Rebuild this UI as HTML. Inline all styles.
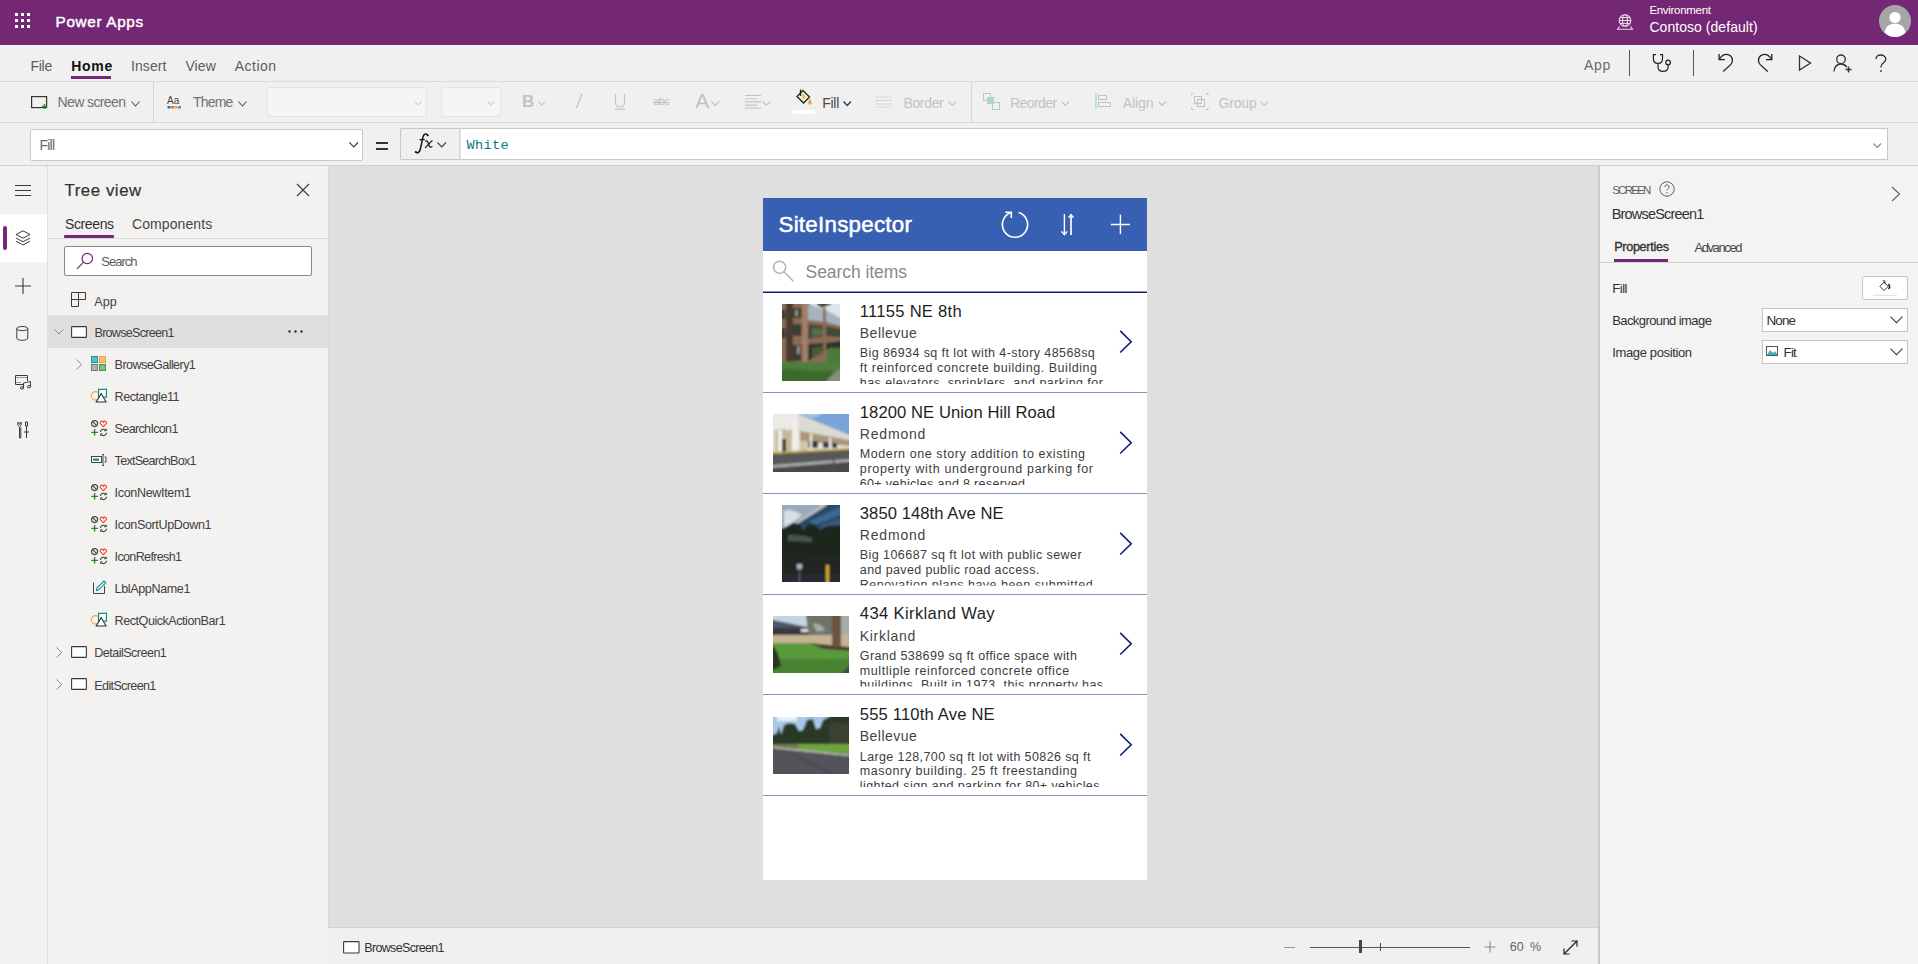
<!DOCTYPE html><html><head><meta charset="utf-8"><style>
*{margin:0;padding:0}
html,body{width:1918px;height:964px;overflow:hidden;background:#f0f0f0;position:relative}
.a{position:absolute}
.t{line-height:1;white-space:nowrap}
svg.a{overflow:visible}
</style></head><body><div class="a" style="left:0px;top:0px;width:1918px;height:45px;background:#742774;"></div>
<div class="a" style="left:15px;top:13px;width:3px;height:3px;background:#fff;"></div>
<div class="a" style="left:15px;top:19px;width:3px;height:3px;background:#fff;"></div>
<div class="a" style="left:15px;top:25px;width:3px;height:3px;background:#fff;"></div>
<div class="a" style="left:21px;top:13px;width:3px;height:3px;background:#fff;"></div>
<div class="a" style="left:21px;top:19px;width:3px;height:3px;background:#fff;"></div>
<div class="a" style="left:21px;top:25px;width:3px;height:3px;background:#fff;"></div>
<div class="a" style="left:27px;top:13px;width:3px;height:3px;background:#fff;"></div>
<div class="a" style="left:27px;top:19px;width:3px;height:3px;background:#fff;"></div>
<div class="a" style="left:27px;top:25px;width:3px;height:3px;background:#fff;"></div>
<div class="a t" style="left:55.60px;top:14.19px;font-size:15.3px;font-weight:400;color:#fff;font-family:'Liberation Sans', sans-serif;letter-spacing:0.654px;-webkit-text-stroke:0.45px #fff;">Power Apps</div>
<svg class="a" style="left:1616px;top:13px;" width="18" height="18" viewBox="0 0 18 18" fill="none"><g stroke="#e8d6e8" stroke-width="1.1"><circle cx="9" cy="7.5" r="5.8"/><ellipse cx="9" cy="7.5" rx="2.5" ry="5.8"/><line x1="3.2" y1="7.5" x2="14.8" y2="7.5"/><line x1="4" y1="4.6" x2="14" y2="4.6"/><line x1="4" y1="10.4" x2="14" y2="10.4"/><path d="M3.5 13.2 L1.5 16.3 H16.5 L14.5 13.2"/></g></svg>
<div class="a t" style="left:1649.40px;top:5.03px;font-size:11.5px;font-weight:400;color:#fff;font-family:'Liberation Sans', sans-serif;letter-spacing:-0.301px;">Environment</div>
<div class="a t" style="left:1649.40px;top:19.90px;font-size:14px;font-weight:400;color:#fff;font-family:'Liberation Sans', sans-serif;letter-spacing:0.050px;">Contoso (default)</div>
<svg class="a" style="left:1879px;top:5px;" width="32" height="32" viewBox="0 0 32 32" fill="none"><circle cx="16" cy="16" r="16" fill="#a6a6a6"/><circle cx="16" cy="12.5" r="5.6" fill="#fff"/><path d="M5.5 27.5 C7 20.5 11 18.8 16 18.8 C21 18.8 25 20.5 26.5 27.5 C23.5 30.5 20 32 16 32 C12 32 8.5 30.5 5.5 27.5Z" fill="#fff"/></svg>
<div class="a" style="left:0px;top:45px;width:1918px;height:1px;background:#f7f7f7;"></div>
<div class="a" style="left:0px;top:46px;width:1918px;height:35px;background:#f0f0f0;"></div>
<div class="a" style="left:0px;top:81px;width:1918px;height:1px;background:#dadada;"></div>
<div class="a t" style="left:30.50px;top:59.40px;font-size:14px;font-weight:400;color:#5c5c5c;font-family:'Liberation Sans', sans-serif;letter-spacing:-0.288px;">File</div>
<div class="a t" style="left:71.20px;top:59.40px;font-size:14px;font-weight:700;color:#111;font-family:'Liberation Sans', sans-serif;letter-spacing:0.698px;">Home</div>
<div class="a" style="left:71px;top:76px;width:40px;height:3px;background:#742774;"></div>
<div class="a t" style="left:131.00px;top:59.40px;font-size:14px;font-weight:400;color:#5c5c5c;font-family:'Liberation Sans', sans-serif;letter-spacing:0.077px;">Insert</div>
<div class="a t" style="left:185.40px;top:59.40px;font-size:14px;font-weight:400;color:#5c5c5c;font-family:'Liberation Sans', sans-serif;letter-spacing:0.102px;">View</div>
<div class="a t" style="left:234.70px;top:59.40px;font-size:14px;font-weight:400;color:#5c5c5c;font-family:'Liberation Sans', sans-serif;letter-spacing:0.496px;">Action</div>
<div class="a t" style="left:1583.90px;top:58.00px;font-size:14px;font-weight:400;color:#6a6a6a;font-family:'Liberation Sans', sans-serif;letter-spacing:0.739px;">App</div>
<div class="a" style="left:1629px;top:50px;width:1px;height:26px;background:#555;"></div>
<div class="a" style="left:1693px;top:50px;width:1px;height:26px;background:#555;"></div>
<svg class="a" style="left:1652px;top:54px;" width="21" height="19" viewBox="0 0 21 19" fill="none"><g stroke="#222" stroke-width="1.2" fill="none"><path d="M4 0.6 H1.4 V5 C1.4 7.7 3.4 9.4 6 9.4 C8.6 9.4 10.5 7.7 10.5 5 V0.6 H8"/><path d="M6 9.4 V13 C6 15.7 8 17.4 11 17.4 C14 17.4 16.1 15.7 16.1 13 V10.7"/><circle cx="16.1" cy="8.4" r="2.3"/></g></svg>
<svg class="a" style="left:1718px;top:54px;" width="16" height="18" viewBox="0 0 16 18" fill="none"><g stroke="#222" stroke-width="1.3" fill="none"><path d="M1.1 0 V5.6 H6.8"/><path d="M1.4 5.3 C3.5 1.6 6 0.4 8.5 0.4 C11.6 0.4 14.4 2.9 14.4 6.4 C14.4 8.2 13.7 9.6 12.4 10.9 L5.2 17.6"/></g></svg>
<svg class="a" style="left:1757px;top:54px;" width="16" height="18" viewBox="0 0 16 18" fill="none"><g transform="translate(15.9 0) scale(-1 1)"><g stroke="#222" stroke-width="1.3" fill="none"><path d="M1.1 0 V5.6 H6.8"/><path d="M1.4 5.3 C3.5 1.6 6 0.4 8.5 0.4 C11.6 0.4 14.4 2.9 14.4 6.4 C14.4 8.2 13.7 9.6 12.4 10.9 L5.2 17.6"/></g></g></svg>
<svg class="a" style="left:1798px;top:55px;" width="14" height="16" viewBox="0 0 14 16" fill="none"><path d="M1.5 1 L12.5 8 L1.5 15 Z" stroke="#333" stroke-width="1.3" fill="none" stroke-linejoin="miter"/></svg>
<svg class="a" style="left:1833px;top:54px;" width="20" height="19" viewBox="0 0 20 19" fill="none"><g stroke="#333" stroke-width="1.3" fill="none"><circle cx="8" cy="5.3" r="4.3"/><path d="M1 17.5 C1.5 12.5 4.5 10 8 10 C10.5 10 12.5 11.2 13.8 13"/><path d="M15.5 12.5 V18.5 M12.5 15.5 H18.5" stroke-width="1.5"/></g></svg>
<svg class="a" style="left:1874px;top:54px;" width="14" height="19" viewBox="0 0 14 19" fill="none"><g stroke="#333" stroke-width="1.3" fill="none"><path d="M2 5 C2 2.5 4 1 6.8 1 C9.6 1 11.8 2.8 11.8 5.3 C11.8 8.5 7 9 7 12.5 V13.5"/></g><circle cx="7" cy="17" r="0.9" fill="#333"/></svg>
<div class="a" style="left:0px;top:82px;width:1918px;height:40px;background:#f0f0f0;"></div>
<div class="a" style="left:0px;top:122px;width:1918px;height:1px;background:#d8d8d8;"></div>
<svg class="a" style="left:31px;top:96px;" width="17" height="13" viewBox="0 0 17 13" fill="none"><rect x="0.6" y="0.6" width="15" height="11" stroke="#333" stroke-width="1.2" fill="none"/><path d="M13.5 8 V13 M11 10.5 H16" stroke="#1e8a1e" stroke-width="1.3"/></svg>
<div class="a t" style="left:57.60px;top:95.40px;font-size:14px;font-weight:400;color:#707070;font-family:'Liberation Sans', sans-serif;letter-spacing:-0.614px;">New screen</div>
<svg class="a" style="left:130.7px;top:100.5px;" width="9" height="6" viewBox="0 0 9 6" fill="none"><path d="M0.5 0.5 L4.5 5 L8.5 0.5" stroke="#555" stroke-width="1.1" fill="none"/></svg>
<div class="a" style="left:153px;top:82px;width:1px;height:40px;background:#d6d6d6;"></div>
<svg class="a" style="left:167px;top:95px;" width="15" height="14" viewBox="0 0 15 14" fill="none"><text x="0" y="9" font-family="Liberation Sans" font-size="10" fill="#444">Aa</text><rect x="0.5" y="11" width="3" height="2.5" fill="#2b6cb0"/><rect x="4" y="11" width="3" height="2.5" fill="#d97a2b"/><rect x="7.5" y="11" width="3" height="2.5" fill="#e0a050"/><rect x="11" y="11" width="3" height="2.5" fill="#5aa07a"/></svg>
<div class="a t" style="left:193.00px;top:95.40px;font-size:14px;font-weight:400;color:#707070;font-family:'Liberation Sans', sans-serif;letter-spacing:-0.795px;">Theme</div>
<svg class="a" style="left:238px;top:100.5px;" width="9" height="6" viewBox="0 0 9 6" fill="none"><path d="M0.5 0.5 L4.5 5 L8.5 0.5" stroke="#555" stroke-width="1.1" fill="none"/></svg>
<div class="a" style="left:267px;top:87px;width:160px;height:30px;background:#f5f5f5;border:1px solid #e3e3e3;box-sizing:border-box;border-radius:2px"></div>
<svg class="a" style="left:414px;top:100.5px;" width="8" height="5" viewBox="0 0 8 5" fill="none"><path d="M0.5 0.5 L4.0 4 L7.5 0.5" stroke="#d0d0d0" stroke-width="1.1" fill="none"/></svg>
<div class="a" style="left:441px;top:87px;width:60px;height:30px;background:#f5f5f5;border:1px solid #e3e3e3;box-sizing:border-box;border-radius:2px"></div>
<svg class="a" style="left:487px;top:100.5px;" width="8" height="5" viewBox="0 0 8 5" fill="none"><path d="M0.5 0.5 L4.0 4 L7.5 0.5" stroke="#d0d0d0" stroke-width="1.1" fill="none"/></svg>
<div class="a t" style="left:522.00px;top:93.35px;font-size:17px;font-weight:700;color:#c2c2c2;font-family:'Liberation Sans', sans-serif;">B</div>
<svg class="a" style="left:538px;top:101px;" width="7.5" height="5" viewBox="0 0 7.5 5" fill="none"><path d="M0.5 0.5 L3.75 4 L7.0 0.5" stroke="#c2c2c2" stroke-width="1.1" fill="none"/></svg>
<svg class="a" style="left:575px;top:93px;" width="8" height="16" viewBox="0 0 8 16" fill="none"><path d="M7 1 L1.5 15" stroke="#c2c2c2" stroke-width="1.3"/></svg>
<svg class="a" style="left:614px;top:93px;" width="12" height="17" viewBox="0 0 12 17" fill="none"><g stroke="#c2c2c2" stroke-width="1.1" fill="none"><path d="M1.5 1 V9.5 C1.5 12.5 3.5 14 6 14 C8.5 14 10.5 12.5 10.5 9.5 V1"/><path d="M1 16.2 H11"/></g></svg>
<div class="a t" style="left:653.50px;top:95.65px;font-size:11px;font-weight:400;color:#c2c2c2;font-family:'Liberation Sans', sans-serif;letter-spacing:-0.825px;">abc</div>
<div class="a" style="left:653px;top:101.8px;width:16px;height:1px;background:#c2c2c2;"></div>
<div class="a t" style="left:695.20px;top:90.15px;font-size:21px;font-weight:400;color:#c2c2c2;font-family:'Liberation Sans', sans-serif;letter-spacing:1.084px;">A</div>
<svg class="a" style="left:711px;top:100.5px;" width="8.5" height="5.5" viewBox="0 0 8.5 5.5" fill="none"><path d="M0.5 0.5 L4.25 4.5 L8.0 0.5" stroke="#c2c2c2" stroke-width="1.1" fill="none"/></svg>
<svg class="a" style="left:745px;top:95px;" width="17" height="13" viewBox="0 0 17 13" fill="none"><g stroke="#c2c2c2" stroke-width="1.1"><path d="M0 0.5 H16 M0 3.7 H12 M0 6.9 H16 M0 10.1 H12 M0 13 H16"/></g></svg>
<svg class="a" style="left:762px;top:101px;" width="8.5" height="5.5" viewBox="0 0 8.5 5.5" fill="none"><path d="M0.5 0.5 L4.25 4.5 L8.0 0.5" stroke="#c2c2c2" stroke-width="1.1" fill="none"/></svg>
<svg class="a" style="left:794px;top:89px;" width="20" height="19" viewBox="0 0 20 19" fill="none"><g stroke="#222" stroke-width="1.3" fill="none"><path d="M9 1.5 L15.5 8 L9.5 14 L3 7.5 Z"/><path d="M6.5 0.5 V7"/></g><path d="M15.8 9.5 C16.8 11.5 17.8 12.5 17.8 13.8 C17.8 15 17 15.8 16 15.8 C15 15.8 14.2 15 14.2 13.8 C14.2 12.5 15 11.5 15.8 9.5Z" fill="#e3b11c"/><path d="M7.5 3.5 L12 7.8 L9 10.8" fill="#e3b11c" stroke="none" opacity="0.8"/></svg>
<div class="a" style="left:793px;top:110px;width:22px;height:4px;background:#ffffff;"></div>
<div class="a t" style="left:822.30px;top:95.60px;font-size:14px;font-weight:400;color:#4a4a4a;font-family:'Liberation Sans', sans-serif;letter-spacing:-0.297px;">Fill</div>
<svg class="a" style="left:843px;top:100.5px;" width="8.5" height="5.5" viewBox="0 0 8.5 5.5" fill="none"><path d="M0.5 0.5 L4.25 4.5 L8.0 0.5" stroke="#333" stroke-width="1.2" fill="none"/></svg>
<svg class="a" style="left:876px;top:96px;" width="16" height="12" viewBox="0 0 16 12" fill="none"><g stroke="#c2c2c2" stroke-width="1" stroke-dasharray="1.2 1"><path d="M0 1 H16 M0 4.5 H16 M0 8 H16 M0 11 H16"/></g></svg>
<div class="a t" style="left:903.40px;top:95.60px;font-size:14px;font-weight:400;color:#c2c2c2;font-family:'Liberation Sans', sans-serif;letter-spacing:-0.326px;">Border</div>
<svg class="a" style="left:948px;top:100.5px;" width="8.5" height="5.5" viewBox="0 0 8.5 5.5" fill="none"><path d="M0.5 0.5 L4.25 4.5 L8.0 0.5" stroke="#c2c2c2" stroke-width="1.1" fill="none"/></svg>
<div class="a" style="left:971px;top:82px;width:1px;height:40px;background:#d8d8d8;"></div>
<svg class="a" style="left:983px;top:93px;" width="18" height="18" viewBox="0 0 18 18" fill="none"><g stroke="#c2c2c2" stroke-width="1" fill="none"><rect x="0.5" y="0.5" width="7" height="7"/><rect x="9.5" y="9.5" width="7" height="7"/></g><rect x="4" y="4" width="7" height="7" fill="#a8d6d6"/></svg>
<div class="a t" style="left:1010.00px;top:95.60px;font-size:14px;font-weight:400;color:#c2c2c2;font-family:'Liberation Sans', sans-serif;letter-spacing:-0.566px;">Reorder</div>
<svg class="a" style="left:1061.4px;top:100.5px;" width="8.5" height="5.5" viewBox="0 0 8.5 5.5" fill="none"><path d="M0.5 0.5 L4.25 4.5 L8.0 0.5" stroke="#c2c2c2" stroke-width="1.1" fill="none"/></svg>
<svg class="a" style="left:1095px;top:93px;" width="18" height="16" viewBox="0 0 18 16" fill="none"><path d="M1 0 V16" stroke="#8fcfcf" stroke-width="1"/><g stroke="#c2c2c2" stroke-width="1" fill="none"><rect x="3.5" y="2.5" width="8" height="4"/><rect x="3.5" y="9.5" width="12" height="4"/></g></svg>
<div class="a t" style="left:1122.70px;top:95.60px;font-size:14px;font-weight:400;color:#c2c2c2;font-family:'Liberation Sans', sans-serif;letter-spacing:-0.060px;">Align</div>
<svg class="a" style="left:1157.7px;top:100.5px;" width="8.5" height="5.5" viewBox="0 0 8.5 5.5" fill="none"><path d="M0.5 0.5 L4.25 4.5 L8.0 0.5" stroke="#c2c2c2" stroke-width="1.1" fill="none"/></svg>
<svg class="a" style="left:1191px;top:93px;" width="18" height="17" viewBox="0 0 18 17" fill="none"><g stroke="#c2c2c2" stroke-width="1" fill="none"><rect x="3.5" y="3.5" width="7" height="7"/><rect x="6.5" y="6.5" width="7" height="7"/><path d="M0.5 0.5 H2.5 M0.5 0.5 V2.5 M17 0.5 H15 M17 0.5 V2.5 M0.5 16.5 H2.5 M0.5 16.5 V14.5 M17 16.5 H15 M17 16.5 V14.5"/></g></svg>
<div class="a t" style="left:1218.50px;top:95.60px;font-size:14px;font-weight:400;color:#c2c2c2;font-family:'Liberation Sans', sans-serif;letter-spacing:-0.180px;">Group</div>
<svg class="a" style="left:1260.3px;top:100.5px;" width="8.5" height="5.5" viewBox="0 0 8.5 5.5" fill="none"><path d="M0.5 0.5 L4.25 4.5 L8.0 0.5" stroke="#c2c2c2" stroke-width="1.1" fill="none"/></svg>
<div class="a" style="left:0px;top:123px;width:1918px;height:42px;background:#f0f0f0;"></div>
<div class="a" style="left:0px;top:165px;width:1918px;height:1px;background:#d0d0d0;"></div>
<div class="a" style="left:30px;top:129px;width:333px;height:32px;background:#fff;border:1px solid #c8c8c8;box-sizing:border-box;border-radius:2px"></div>
<div class="a t" style="left:39.60px;top:138.10px;font-size:14px;font-weight:400;color:#6a6a6a;font-family:'Liberation Sans', sans-serif;letter-spacing:-0.830px;">Fill</div>
<svg class="a" style="left:349px;top:142px;" width="9.5" height="6" viewBox="0 0 9.5 6" fill="none"><path d="M0.5 0.5 L4.75 5 L9.0 0.5" stroke="#444" stroke-width="1.2" fill="none"/></svg>
<div class="a" style="left:376px;top:142px;width:12px;height:2px;background:#333;"></div>
<div class="a" style="left:376px;top:148px;width:12px;height:2px;background:#333;"></div>
<div class="a" style="left:400px;top:128px;width:60px;height:32px;background:#f0f0f0;border:1px solid #c8c8c8;box-sizing:border-box;border-radius:2px 0 0 2px;border-right-color:#d8d8d8"></div>
<svg class="a" style="left:412px;top:132px;" width="22" height="23" viewBox="0 0 22 23" fill="none"><g stroke="#111" fill="none" stroke-linecap="round"><path d="M15.6 3.2 C14.8 1.6 12.2 1.4 11.2 4.2 C10.4 6.5 9.4 13 8.2 17.5 C7.4 20.5 5.5 21.6 3.6 20.2" stroke-width="1.5"/><path d="M8 7.6 H12.4" stroke-width="1.1"/><path d="M13.6 9.2 C15.2 8.2 16 9.6 16.6 12 C17.2 14.4 18.2 16 20 14.6" stroke-width="1.2"/><path d="M20.2 8.8 C18.6 9.6 16.2 12.6 13.4 15.6" stroke-width="1.2"/></g><circle cx="15.8" cy="3.4" r="0.9" fill="#111"/><circle cx="3.8" cy="20" r="0.9" fill="#111"/></svg>
<svg class="a" style="left:437.3px;top:142px;" width="9.5" height="6" viewBox="0 0 9.5 6" fill="none"><path d="M0.5 0.5 L4.75 5 L9.0 0.5" stroke="#444" stroke-width="1.2" fill="none"/></svg>
<div class="a" style="left:460px;top:128px;width:1428px;height:32px;background:#fff;border:1px solid #c8c8c8;box-sizing:border-box;border-left:1px solid #e0e0e0"></div>
<div class="a t" style="left:466.40px;top:138.59px;font-size:13.7px;font-weight:400;color:#0b7a80;font-family:'Liberation Mono', monospace;letter-spacing:0.323px;">White</div>
<svg class="a" style="left:1873px;top:143px;" width="8.5" height="5.5" viewBox="0 0 8.5 5.5" fill="none"><path d="M0.5 0.5 L4.25 4.5 L8.0 0.5" stroke="#888" stroke-width="1.1" fill="none"/></svg>
<div class="a" style="left:0px;top:166px;width:47px;height:798px;background:#f3f2f1;"></div>
<div class="a" style="left:47px;top:166px;width:1px;height:798px;background:#e1dfdd;"></div>
<div class="a" style="left:48px;top:166px;width:280px;height:798px;background:#f3f2f1;"></div>
<div class="a" style="left:327px;top:166px;width:1px;height:798px;background:#f5f5f4;"></div>
<div class="a" style="left:328px;top:166px;width:1270px;height:761px;background:#dfdfdf;"></div>
<div class="a" style="left:328px;top:166px;width:2px;height:761px;background:#dbdbdb;"></div>
<div class="a" style="left:328px;top:927px;width:1270px;height:1px;background:#d2d2d2;"></div>
<div class="a" style="left:328px;top:928px;width:1270px;height:36px;background:#f0f0f0;"></div>
<div class="a" style="left:1598px;top:166px;width:2px;height:798px;background:#c9c9c9;"></div>
<div class="a" style="left:1600px;top:166px;width:318px;height:798px;background:#f3f3f3;"></div>
<svg class="a" style="left:15px;top:185px;" width="16" height="11" viewBox="0 0 16 11" fill="none"><g stroke="#3b3a39" stroke-width="1"><path d="M0 0.5 H16 M0 5.5 H16 M0 10.5 H16"/></g></svg>
<div class="a" style="left:0px;top:214px;width:47px;height:48px;background:#fff;"></div>
<div class="a" style="left:3px;top:226px;width:4px;height:24px;background:#742774;border-radius:2px"></div>
<svg class="a" style="left:15px;top:230px;" width="16" height="16" viewBox="0 0 16 16" fill="none"><g stroke="#3b3a39" stroke-width="1" fill="none" stroke-linejoin="round"><path d="M8 0.8 L15 4.5 L8 8.2 L1 4.5 Z"/><path d="M1 8 L8 11.7 L15 8"/><path d="M1 11.2 L8 14.9 L15 11.2"/></g></svg>
<svg class="a" style="left:15px;top:278px;" width="16" height="16" viewBox="0 0 16 16" fill="none"><path d="M8 0 V16 M0 8 H16" stroke="#3b3a39" stroke-width="1.1"/></svg>
<svg class="a" style="left:16px;top:326px;" width="13" height="15" viewBox="0 0 13 15" fill="none"><g stroke="#3b3a39" stroke-width="1" fill="none"><ellipse cx="6.3" cy="2.6" rx="5.5" ry="2.1"/><path d="M0.8 2.6 V12.2 C0.8 13.4 3.2 14.3 6.3 14.3 C9.4 14.3 11.8 13.4 11.8 12.2 V2.6"/></g></svg>
<svg class="a" style="left:15px;top:375px;" width="17" height="15" viewBox="0 0 17 15" fill="none"><g stroke="#3b3a39" stroke-width="1" fill="none"><path d="M9 9.5 H0.5 V0.5 H12.5 V6"/><path d="M0.5 2.5 H12.5 M0.5 7.5 H6" stroke-dasharray="1 1"/><path d="M8.5 13 V8 L15.5 6.5 V11.5"/><ellipse cx="7" cy="13" rx="1.6" ry="1.2"/><ellipse cx="14" cy="11.7" rx="1.6" ry="1.2"/></g></svg>
<svg class="a" style="left:17px;top:421px;" width="12" height="18" viewBox="0 0 12 18" fill="none"><g stroke="#3b3a39" stroke-width="1" fill="none"><path d="M2.5 17 V6 C1 5.2 0.6 3.5 1 1 L2 3 H3 L4 1 C4.4 3.5 4 5.2 2.5 6"/><path d="M2.5 6 V17 H3.8 V6.5"/><path d="M8.5 1 H10.5 V5 H8.5 Z M9.5 5 V17 M7 11 H12"/></g></svg>
<div class="a t" style="left:64.50px;top:182.52px;font-size:16.8px;font-weight:400;color:#323130;font-family:'Liberation Sans', sans-serif;letter-spacing:0.569px;-webkit-text-stroke:0.2px #323130;">Tree view</div>
<svg class="a" style="left:296px;top:183px;" width="14" height="14" viewBox="0 0 14 14" fill="none"><path d="M1 1 L13 13 M13 1 L1 13" stroke="#3b3a39" stroke-width="1.1"/></svg>
<div class="a t" style="left:65.00px;top:217.10px;font-size:14px;font-weight:400;color:#323130;font-family:'Liberation Sans', sans-serif;letter-spacing:-0.377px;">Screens</div>
<div class="a t" style="left:132.00px;top:217.10px;font-size:14px;font-weight:400;color:#484644;font-family:'Liberation Sans', sans-serif;letter-spacing:0.090px;">Components</div>
<div class="a" style="left:64px;top:235px;width:50px;height:3px;background:#742774;border-radius:1px"></div>
<div class="a" style="left:48px;top:238px;width:280px;height:1px;background:#dcdad8;"></div>
<div class="a" style="left:64px;top:246px;width:248px;height:30px;background:#fff;border:1px solid #8a8886;box-sizing:border-box;border-radius:2px"></div>
<svg class="a" style="left:76px;top:252px;" width="18" height="18" viewBox="0 0 18 18" fill="none"><g stroke="#742774" stroke-width="1.2" fill="none"><circle cx="11.3" cy="6.5" r="5.2"/><path d="M7.6 10.2 L1 16.8"/></g></svg>
<div class="a t" style="left:101.20px;top:255.45px;font-size:13px;font-weight:400;color:#605e5c;font-family:'Liberation Sans', sans-serif;letter-spacing:-0.981px;">Search</div>
<div class="a" style="left:48px;top:315px;width:280px;height:33px;background:#e1dfdd;"></div>
<svg class="a" style="left:288px;top:330px;" width="16" height="3" viewBox="0 0 16 3" fill="none"><circle cx="1.5" cy="1.5" r="1.2" fill="#333"/><circle cx="7.5" cy="1.5" r="1.2" fill="#333"/><circle cx="13.5" cy="1.5" r="1.2" fill="#333"/></svg>
<div class="a t" style="left:94.20px;top:295.69px;font-size:12.6px;font-weight:400;color:#42413f;font-family:'Liberation Sans', sans-serif;letter-spacing:0.119px;">App</div>
<svg class="a" style="left:71px;top:292px;" width="16" height="16" viewBox="0 0 16 16" fill="none"><g stroke="#3b3a39" stroke-width="1" fill="none"><path d="M0.5 0.5 H14.5 V7.5 H7.5 V14.5 H0.5 Z"/><path d="M7.5 0.5 V7.5 H0.5"/></g></svg>
<div class="a t" style="left:94.50px;top:327.09px;font-size:12.6px;font-weight:400;color:#42413f;font-family:'Liberation Sans', sans-serif;letter-spacing:-0.746px;">BrowseScreen1</div>
<svg class="a" style="left:54px;top:328.8px;" width="10" height="6" viewBox="0 0 10 6" fill="none"><path d="M0.5 0.5 L5 5 L9.5 0.5" stroke="#8a8886" stroke-width="1" fill="none"/></svg>
<svg class="a" style="left:71px;top:325.8px;" width="16" height="12" viewBox="0 0 16 12" fill="none"><rect x="0.6" y="0.6" width="14.8" height="10.8" rx="0.5" stroke="#3b3a39" stroke-width="1.1" fill="#fff"/></svg>
<div class="a t" style="left:114.60px;top:358.79px;font-size:12.6px;font-weight:400;color:#42413f;font-family:'Liberation Sans', sans-serif;letter-spacing:-0.587px;">BrowseGallery1</div>
<svg class="a" style="left:75.6px;top:358.5px;" width="7" height="11" viewBox="0 0 7 11" fill="none"><path d="M0.5 0.5 L5.5 5.5 L0.5 10.5" stroke="#8a8886" stroke-width="1" fill="none"/></svg>
<svg class="a" style="left:91px;top:356.0px;" width="15" height="15" viewBox="0 0 15 15" fill="none"><rect x="0.5" y="0.5" width="6" height="6" fill="#4fc1c8" stroke="#2a8f96" stroke-width="1"/><rect x="8.5" y="0.5" width="6" height="6" fill="#fbc37a" stroke="#e7a43f" stroke-width="1"/><rect x="0.5" y="8.5" width="6" height="6" fill="#b4b4b4" stroke="#777" stroke-width="1"/><rect x="8.5" y="8.5" width="6" height="6" fill="#7fc27f" stroke="#3d9a3d" stroke-width="1"/></svg>
<div class="a t" style="left:114.60px;top:390.79px;font-size:12.6px;font-weight:400;color:#42413f;font-family:'Liberation Sans', sans-serif;letter-spacing:-0.484px;">Rectangle11</div>
<svg class="a" style="left:90px;top:388px;" width="18" height="16" viewBox="0 0 18 16" fill="none"><circle cx="5.4" cy="7.8" r="4.2" stroke="#eba83a" stroke-width="1.1" fill="none"/><rect x="8.6" y="1.3" width="7.8" height="7.8" stroke="#0e8a8f" stroke-width="1.2" fill="#fff"/><path d="M11.2 5.6 L16 14 H6.2 Z" stroke="#333" stroke-width="1.1" fill="#fff" stroke-linejoin="miter"/></svg>
<div class="a t" style="left:114.60px;top:422.89px;font-size:12.6px;font-weight:400;color:#42413f;font-family:'Liberation Sans', sans-serif;letter-spacing:-0.686px;">SearchIcon1</div>
<svg class="a" style="left:91px;top:420.1px;" width="16" height="16" viewBox="0 0 16 16" fill="none"><circle cx="3.6" cy="3.6" r="3" stroke="#444" stroke-width="1.1" fill="none"/><path d="M1.5 1.5 L5.7 5.7" stroke="#444" stroke-width="1.1"/><path d="M12.3 6.6 L9.6 3.9 C8.8 3 9 1.5 10.2 1.2 C11.2 1 12 1.6 12.3 2.2 C12.6 1.6 13.4 1 14.4 1.2 C15.6 1.5 15.8 3 15 3.9 Z" stroke="#e0502a" stroke-width="1.1" fill="none"/><path d="M3.6 9 V15.6 M0.3 12.3 H6.9" stroke="#1e8a1e" stroke-width="1.3"/><path d="M9.5 12 C9.7 10.2 11 9.2 12.5 9.2 C13.5 9.2 14.3 9.6 14.8 10.3 M15.5 12.8 C15.3 14.6 14 15.6 12.5 15.6 C11.5 15.6 10.7 15.2 10.2 14.5" stroke="#444" stroke-width="1.1" fill="none"/><path d="M15.3 8.8 V10.8 H13.3 M9.7 16 V14 H11.7" stroke="#444" stroke-width="1" fill="none"/></svg>
<div class="a t" style="left:114.60px;top:454.89px;font-size:12.6px;font-weight:400;color:#42413f;font-family:'Liberation Sans', sans-serif;letter-spacing:-0.751px;">TextSearchBox1</div>
<svg class="a" style="left:91px;top:453.6px;" width="16" height="13" viewBox="0 0 16 13" fill="none"><rect x="0.5" y="2.5" width="10" height="6" stroke="#444" stroke-width="1" fill="#fff"/><rect x="2" y="4.5" width="6" height="2.2" fill="#0e8a8f"/><path d="M11 0.5 H13 M12 0.5 V11.5 M11 11.5 H13 M13.5 3 H15 V8 H13.5" stroke="#444" stroke-width="1" fill="none"/></svg>
<div class="a t" style="left:114.60px;top:486.89px;font-size:12.6px;font-weight:400;color:#42413f;font-family:'Liberation Sans', sans-serif;letter-spacing:-0.367px;">IconNewItem1</div>
<svg class="a" style="left:91px;top:484.1px;" width="16" height="16" viewBox="0 0 16 16" fill="none"><circle cx="3.6" cy="3.6" r="3" stroke="#444" stroke-width="1.1" fill="none"/><path d="M1.5 1.5 L5.7 5.7" stroke="#444" stroke-width="1.1"/><path d="M12.3 6.6 L9.6 3.9 C8.8 3 9 1.5 10.2 1.2 C11.2 1 12 1.6 12.3 2.2 C12.6 1.6 13.4 1 14.4 1.2 C15.6 1.5 15.8 3 15 3.9 Z" stroke="#e0502a" stroke-width="1.1" fill="none"/><path d="M3.6 9 V15.6 M0.3 12.3 H6.9" stroke="#1e8a1e" stroke-width="1.3"/><path d="M9.5 12 C9.7 10.2 11 9.2 12.5 9.2 C13.5 9.2 14.3 9.6 14.8 10.3 M15.5 12.8 C15.3 14.6 14 15.6 12.5 15.6 C11.5 15.6 10.7 15.2 10.2 14.5" stroke="#444" stroke-width="1.1" fill="none"/><path d="M15.3 8.8 V10.8 H13.3 M9.7 16 V14 H11.7" stroke="#444" stroke-width="1" fill="none"/></svg>
<div class="a t" style="left:114.60px;top:518.89px;font-size:12.6px;font-weight:400;color:#42413f;font-family:'Liberation Sans', sans-serif;letter-spacing:-0.375px;">IconSortUpDown1</div>
<svg class="a" style="left:91px;top:516.1px;" width="16" height="16" viewBox="0 0 16 16" fill="none"><circle cx="3.6" cy="3.6" r="3" stroke="#444" stroke-width="1.1" fill="none"/><path d="M1.5 1.5 L5.7 5.7" stroke="#444" stroke-width="1.1"/><path d="M12.3 6.6 L9.6 3.9 C8.8 3 9 1.5 10.2 1.2 C11.2 1 12 1.6 12.3 2.2 C12.6 1.6 13.4 1 14.4 1.2 C15.6 1.5 15.8 3 15 3.9 Z" stroke="#e0502a" stroke-width="1.1" fill="none"/><path d="M3.6 9 V15.6 M0.3 12.3 H6.9" stroke="#1e8a1e" stroke-width="1.3"/><path d="M9.5 12 C9.7 10.2 11 9.2 12.5 9.2 C13.5 9.2 14.3 9.6 14.8 10.3 M15.5 12.8 C15.3 14.6 14 15.6 12.5 15.6 C11.5 15.6 10.7 15.2 10.2 14.5" stroke="#444" stroke-width="1.1" fill="none"/><path d="M15.3 8.8 V10.8 H13.3 M9.7 16 V14 H11.7" stroke="#444" stroke-width="1" fill="none"/></svg>
<div class="a t" style="left:114.60px;top:550.89px;font-size:12.6px;font-weight:400;color:#42413f;font-family:'Liberation Sans', sans-serif;letter-spacing:-0.677px;">IconRefresh1</div>
<svg class="a" style="left:91px;top:548.1px;" width="16" height="16" viewBox="0 0 16 16" fill="none"><circle cx="3.6" cy="3.6" r="3" stroke="#444" stroke-width="1.1" fill="none"/><path d="M1.5 1.5 L5.7 5.7" stroke="#444" stroke-width="1.1"/><path d="M12.3 6.6 L9.6 3.9 C8.8 3 9 1.5 10.2 1.2 C11.2 1 12 1.6 12.3 2.2 C12.6 1.6 13.4 1 14.4 1.2 C15.6 1.5 15.8 3 15 3.9 Z" stroke="#e0502a" stroke-width="1.1" fill="none"/><path d="M3.6 9 V15.6 M0.3 12.3 H6.9" stroke="#1e8a1e" stroke-width="1.3"/><path d="M9.5 12 C9.7 10.2 11 9.2 12.5 9.2 C13.5 9.2 14.3 9.6 14.8 10.3 M15.5 12.8 C15.3 14.6 14 15.6 12.5 15.6 C11.5 15.6 10.7 15.2 10.2 14.5" stroke="#444" stroke-width="1.1" fill="none"/><path d="M15.3 8.8 V10.8 H13.3 M9.7 16 V14 H11.7" stroke="#444" stroke-width="1" fill="none"/></svg>
<div class="a t" style="left:114.60px;top:582.99px;font-size:12.6px;font-weight:400;color:#42413f;font-family:'Liberation Sans', sans-serif;letter-spacing:-0.395px;">LblAppName1</div>
<svg class="a" style="left:93px;top:580.2px;" width="13" height="14" viewBox="0 0 13 14" fill="none"><path d="M0.5 2.5 V13.5 H11.5 V6" stroke="#444" stroke-width="1" fill="none"/><path d="M3.5 10.5 L4 8 L11 1 L12.8 2.8 L5.8 9.8 Z" stroke="#0e8a8f" stroke-width="1.1" fill="#fff"/></svg>
<div class="a t" style="left:114.60px;top:615.09px;font-size:12.6px;font-weight:400;color:#42413f;font-family:'Liberation Sans', sans-serif;letter-spacing:-0.480px;">RectQuickActionBar1</div>
<svg class="a" style="left:90px;top:612px;" width="18" height="16" viewBox="0 0 18 16" fill="none"><circle cx="5.4" cy="7.8" r="4.2" stroke="#eba83a" stroke-width="1.1" fill="none"/><rect x="8.6" y="1.3" width="7.8" height="7.8" stroke="#0e8a8f" stroke-width="1.2" fill="#fff"/><path d="M11.2 5.6 L16 14 H6.2 Z" stroke="#333" stroke-width="1.1" fill="#fff" stroke-linejoin="miter"/></svg>
<div class="a t" style="left:94.30px;top:647.49px;font-size:12.6px;font-weight:400;color:#42413f;font-family:'Liberation Sans', sans-serif;letter-spacing:-0.546px;">DetailScreen1</div>
<svg class="a" style="left:56.3px;top:647.2px;" width="7" height="11" viewBox="0 0 7 11" fill="none"><path d="M0.5 0.5 L5.5 5.5 L0.5 10.5" stroke="#8a8886" stroke-width="1" fill="none"/></svg>
<svg class="a" style="left:71px;top:646.2px;" width="16" height="12" viewBox="0 0 16 12" fill="none"><rect x="0.6" y="0.6" width="14.8" height="10.8" rx="0.5" stroke="#3b3a39" stroke-width="1.1" fill="#fff"/></svg>
<div class="a t" style="left:94.30px;top:679.59px;font-size:12.6px;font-weight:400;color:#42413f;font-family:'Liberation Sans', sans-serif;letter-spacing:-0.655px;">EditScreen1</div>
<svg class="a" style="left:56.3px;top:679.3px;" width="7" height="11" viewBox="0 0 7 11" fill="none"><path d="M0.5 0.5 L5.5 5.5 L0.5 10.5" stroke="#8a8886" stroke-width="1" fill="none"/></svg>
<svg class="a" style="left:71px;top:678.3px;" width="16" height="12" viewBox="0 0 16 12" fill="none"><rect x="0.6" y="0.6" width="14.8" height="10.8" rx="0.5" stroke="#3b3a39" stroke-width="1.1" fill="#fff"/></svg>
<div class="a" style="left:763px;top:198px;width:384px;height:682px;background:#fff;"></div>
<div class="a" style="left:763px;top:198px;width:384px;height:53px;background:#3860b2;"></div>
<div class="a t" style="left:778.50px;top:214.44px;font-size:22.3px;font-weight:400;color:#fff;font-family:'Liberation Sans', sans-serif;letter-spacing:0.274px;-webkit-text-stroke:0.5px #fff;">SiteInspector</div>
<svg class="a" style="left:1001px;top:210px;" width="28" height="29" viewBox="0 0 28 29" fill="none"><path d="M17.6 2.6 A12.6 12.6 0 1 1 10.4 2.6" stroke="#fff" stroke-width="1.6" fill="none"/><path d="M4.4 2.2 H10.3 V8" stroke="#fff" stroke-width="1.6" fill="none"/></svg>
<svg class="a" style="left:1060px;top:213px;" width="15" height="24" viewBox="0 0 15 24" fill="none"><g stroke="#fff" fill="none"><path d="M4.4 1 V21.6" stroke-width="1.4"/><path d="M1.4 18.4 L4.4 21.7 L7.3 18.4" stroke-width="1.4"/><path d="M11 22 V1.8" stroke-width="1.7"/><path d="M8.6 4.6 L11 1.6 L13.5 4.6" stroke-width="1.4"/></g></svg>
<svg class="a" style="left:1110px;top:214px;" width="21" height="21" viewBox="0 0 21 21" fill="none"><path d="M10.4 0.8 V20 M0.9 10.5 H20" stroke="#fff" stroke-width="1.4"/></svg>
<svg class="a" style="left:772px;top:260px;" width="23" height="23" viewBox="0 0 23 23" fill="none"><g stroke="#b0b0b0" stroke-width="1.4" fill="none"><circle cx="7.6" cy="7.3" r="6.1"/><path d="M11.9 11.6 L21.3 21.2"/></g></svg>
<div class="a t" style="left:805.60px;top:263.62px;font-size:17.5px;font-weight:400;color:#8a8a8a;font-family:'Liberation Sans', sans-serif;letter-spacing:-0.070px;">Search items</div>
<div class="a" style="left:763px;top:291px;width:384px;height:1px;background:#8a90b8;"></div>
<div class="a" style="left:763px;top:292px;width:384px;height:1px;background:#0b1e77;"></div>
<div class="a t" style="left:859.80px;top:303.89px;font-size:16.6px;font-weight:400;color:#1e1e1e;font-family:'Liberation Sans', sans-serif;letter-spacing:0.257px;">11155 NE 8th</div>
<div class="a t" style="left:859.80px;top:326.10px;font-size:14px;font-weight:400;color:#444;font-family:'Liberation Sans', sans-serif;letter-spacing:0.485px;">Bellevue</div>
<div class="a t" style="left:859.80px;top:347.48px;font-size:12.5px;font-weight:400;color:#3c3c3c;font-family:'Liberation Sans', sans-serif;letter-spacing:0.412px;">Big 86934 sq ft lot with 4-story 48568sq</div>
<div class="a t" style="left:859.80px;top:362.18px;font-size:12.5px;font-weight:400;color:#3c3c3c;font-family:'Liberation Sans', sans-serif;letter-spacing:0.544px;">ft reinforced concrete building. Building</div>
<div class="a t" style="left:859.80px;top:376.88px;font-size:12.5px;font-weight:400;color:#3c3c3c;font-family:'Liberation Sans', sans-serif;letter-spacing:0.437px;clip-path:inset(-4px -4px 5.48px -4px);">has elevators, sprinklers, and parking for</div>
<svg class="a" style="left:1119px;top:330.2px;" width="14" height="24" viewBox="0 0 14 24" fill="none"><path d="M1.2 0.9 L12.2 11.7 L1.2 22.5" stroke="#0b1e77" stroke-width="1.6" fill="none"/></svg>
<svg class="a" style="left:782px;top:304px;overflow:hidden;" width="58" height="77" viewBox="0 0 58 77" fill="none"><defs><filter id="f1" x="-6" y="-6" width="70" height="89" filterUnits="userSpaceOnUse"><feGaussianBlur stdDeviation="0.8"/></filter></defs><g>
  <rect width="58" height="77" fill="#8c6a56"/>
  <path d="M26 0 H58 V16 L48 9 Z" fill="#dfe4e6"/>
  <path d="M34 0 H50 L40 4 Z" fill="#3c4a34"/>
  <path d="M26 1 L44 6 L58 14 V22 L44 18 L26 16 Z" fill="#a6b4c0"/>
  <path d="M26 20 L44 22 L58 25 V33 L44 32 L26 35 Z" fill="#3e4c3a"/>
  <path d="M30 24 L42 25 L42 31 L30 33 Z" fill="#6a7a5a" opacity="0.7"/>
  <path d="M26 40 L44 39 L58 37 V44 L44 46 L26 57 Z" fill="#2c3628"/>
  <path d="M30 44 L40 42 V50 L30 54 Z" fill="#5a6a3c" opacity="0.7"/>
  <rect x="20" y="0" width="6" height="60" fill="#a07e68"/>
  <rect x="41" y="4" width="3" height="50" fill="#8a6a58"/>
  <g fill="#3a3c34"><rect x="11" y="4" width="8.5" height="10"/><rect x="11" y="20" width="8.5" height="12"/><rect x="11" y="41" width="8.5" height="16"/><rect x="0" y="6" width="3.5" height="9"/><rect x="0" y="24" width="3.5" height="10"/></g>
  <g fill="#c8c8b8" opacity="0.6"><rect x="13" y="6" width="3" height="6"/><rect x="15" y="42" width="3" height="8"/></g>
  <rect x="4" y="0" width="7" height="60" fill="#4a3a2e"/>
  <path d="M46 45 C50 42 56 44 58 46 V62 H44 Z" fill="#4a7a38"/>
  <path d="M0 58 C10 56 25 60 58 57 V77 H0 Z" fill="#4e7e3a"/>
  <path d="M0 66 C15 63 30 70 50 66 V77 H0 Z" fill="#3c6a2c"/>
  <path d="M44 77 L58 64 V77 Z" fill="#8a8c7c"/>
 </g><g filter="url(#f1)">
  <rect width="58" height="77" fill="#8c6a56"/>
  <path d="M26 0 H58 V16 L48 9 Z" fill="#dfe4e6"/>
  <path d="M34 0 H50 L40 4 Z" fill="#3c4a34"/>
  <path d="M26 1 L44 6 L58 14 V22 L44 18 L26 16 Z" fill="#a6b4c0"/>
  <path d="M26 20 L44 22 L58 25 V33 L44 32 L26 35 Z" fill="#3e4c3a"/>
  <path d="M30 24 L42 25 L42 31 L30 33 Z" fill="#6a7a5a" opacity="0.7"/>
  <path d="M26 40 L44 39 L58 37 V44 L44 46 L26 57 Z" fill="#2c3628"/>
  <path d="M30 44 L40 42 V50 L30 54 Z" fill="#5a6a3c" opacity="0.7"/>
  <rect x="20" y="0" width="6" height="60" fill="#a07e68"/>
  <rect x="41" y="4" width="3" height="50" fill="#8a6a58"/>
  <g fill="#3a3c34"><rect x="11" y="4" width="8.5" height="10"/><rect x="11" y="20" width="8.5" height="12"/><rect x="11" y="41" width="8.5" height="16"/><rect x="0" y="6" width="3.5" height="9"/><rect x="0" y="24" width="3.5" height="10"/></g>
  <g fill="#c8c8b8" opacity="0.6"><rect x="13" y="6" width="3" height="6"/><rect x="15" y="42" width="3" height="8"/></g>
  <rect x="4" y="0" width="7" height="60" fill="#4a3a2e"/>
  <path d="M46 45 C50 42 56 44 58 46 V62 H44 Z" fill="#4a7a38"/>
  <path d="M0 58 C10 56 25 60 58 57 V77 H0 Z" fill="#4e7e3a"/>
  <path d="M0 66 C15 63 30 70 50 66 V77 H0 Z" fill="#3c6a2c"/>
  <path d="M44 77 L58 64 V77 Z" fill="#8a8c7c"/>
 </g></svg>
<div class="a" style="left:763px;top:392px;width:384px;height:1px;background:#8791bf;"></div>
<div class="a t" style="left:859.80px;top:404.89px;font-size:16.6px;font-weight:400;color:#1e1e1e;font-family:'Liberation Sans', sans-serif;letter-spacing:0.080px;">18200 NE Union Hill Road</div>
<div class="a t" style="left:859.80px;top:427.10px;font-size:14px;font-weight:400;color:#444;font-family:'Liberation Sans', sans-serif;letter-spacing:0.816px;">Redmond</div>
<div class="a t" style="left:859.80px;top:448.48px;font-size:12.5px;font-weight:400;color:#3c3c3c;font-family:'Liberation Sans', sans-serif;letter-spacing:0.579px;">Modern one story addition to existing</div>
<div class="a t" style="left:859.80px;top:463.18px;font-size:12.5px;font-weight:400;color:#3c3c3c;font-family:'Liberation Sans', sans-serif;letter-spacing:0.688px;">property with underground parking for</div>
<div class="a t" style="left:859.80px;top:477.88px;font-size:12.5px;font-weight:400;color:#3c3c3c;font-family:'Liberation Sans', sans-serif;letter-spacing:0.329px;clip-path:inset(-4px -4px 5.48px -4px);">60+ vehicles and 8 reserved</div>
<svg class="a" style="left:1119px;top:430.7px;" width="14" height="24" viewBox="0 0 14 24" fill="none"><path d="M1.2 0.9 L12.2 11.7 L1.2 22.5" stroke="#0b1e77" stroke-width="1.6" fill="none"/></svg>
<svg class="a" style="left:773px;top:414px;overflow:hidden;" width="76" height="58" viewBox="0 0 76 58" fill="none"><defs><filter id="f2" x="-6" y="-6" width="88" height="70" filterUnits="userSpaceOnUse"><feGaussianBlur stdDeviation="0.8"/></filter></defs><g>
  <rect width="76" height="58" fill="#5a5a5c"/>
  <path d="M25 0 H76 V21 Z" fill="#78a4d8"/>
  <path d="M25 0 H50 L40 4 Z" fill="#a8c4e4"/>
  <path d="M0 0 H25 L76 21 V36 L0 40 Z" fill="#e2e0dc"/>
  <path d="M0 0 H25 V16 H0 Z" fill="#eceae6"/>
  <path d="M25 0 L76 21 V26 L25 17 Z" fill="#dcdad4"/>
  <path d="M2 17 C6 14 12 14 15 17 L15 38 H2 Z" fill="#c8b898"/>
  <path d="M15 17 C18 14 22 14 25 17 V38 H15 Z" fill="#c8b898"/>
  <path d="M27 17 L76 26 V32 L27 27 Z" fill="#a89878"/>
  <g fill="#d4c4a8"><rect x="18" y="26" width="7" height="12"/><rect x="27" y="27" width="7" height="11"/></g>
  <g fill="#383838"><rect x="6" y="25" width="7" height="13"/><rect x="35" y="27" width="10" height="7"/><rect x="50" y="28" width="6" height="6"/><rect x="59" y="29" width="5" height="5"/></g>
  <g fill="#f0eeea"><rect x="5" y="16" width="4" height="24"/><rect x="19" y="5" width="6" height="34"/><rect x="37" y="20" width="2" height="18"/><rect x="56" y="24" width="2" height="12"/></g>
  <path d="M0 38 L76 34 V36 L0 40 Z" fill="#c0a838"/>
  <path d="M0 40 L76 36 V58 H0 Z" fill="#58585a"/>
  <path d="M0 51 L76 45 V48 L0 54 Z" fill="#a8acb0"/>
  <path d="M0 54 L76 48 V58 H0 Z" fill="#4a4a4c"/>
  <rect x="60" y="43" width="1.5" height="15" fill="#505050"/>
 </g><g filter="url(#f2)">
  <rect width="76" height="58" fill="#5a5a5c"/>
  <path d="M25 0 H76 V21 Z" fill="#78a4d8"/>
  <path d="M25 0 H50 L40 4 Z" fill="#a8c4e4"/>
  <path d="M0 0 H25 L76 21 V36 L0 40 Z" fill="#e2e0dc"/>
  <path d="M0 0 H25 V16 H0 Z" fill="#eceae6"/>
  <path d="M25 0 L76 21 V26 L25 17 Z" fill="#dcdad4"/>
  <path d="M2 17 C6 14 12 14 15 17 L15 38 H2 Z" fill="#c8b898"/>
  <path d="M15 17 C18 14 22 14 25 17 V38 H15 Z" fill="#c8b898"/>
  <path d="M27 17 L76 26 V32 L27 27 Z" fill="#a89878"/>
  <g fill="#d4c4a8"><rect x="18" y="26" width="7" height="12"/><rect x="27" y="27" width="7" height="11"/></g>
  <g fill="#383838"><rect x="6" y="25" width="7" height="13"/><rect x="35" y="27" width="10" height="7"/><rect x="50" y="28" width="6" height="6"/><rect x="59" y="29" width="5" height="5"/></g>
  <g fill="#f0eeea"><rect x="5" y="16" width="4" height="24"/><rect x="19" y="5" width="6" height="34"/><rect x="37" y="20" width="2" height="18"/><rect x="56" y="24" width="2" height="12"/></g>
  <path d="M0 38 L76 34 V36 L0 40 Z" fill="#c0a838"/>
  <path d="M0 40 L76 36 V58 H0 Z" fill="#58585a"/>
  <path d="M0 51 L76 45 V48 L0 54 Z" fill="#a8acb0"/>
  <path d="M0 54 L76 48 V58 H0 Z" fill="#4a4a4c"/>
  <rect x="60" y="43" width="1.5" height="15" fill="#505050"/>
 </g></svg>
<div class="a" style="left:763px;top:493px;width:384px;height:1px;background:#8791bf;"></div>
<div class="a t" style="left:859.80px;top:505.59px;font-size:16.6px;font-weight:400;color:#1e1e1e;font-family:'Liberation Sans', sans-serif;letter-spacing:0.072px;">3850 148th Ave NE</div>
<div class="a t" style="left:859.80px;top:527.80px;font-size:14px;font-weight:400;color:#444;font-family:'Liberation Sans', sans-serif;letter-spacing:0.816px;">Redmond</div>
<div class="a t" style="left:859.80px;top:549.18px;font-size:12.5px;font-weight:400;color:#3c3c3c;font-family:'Liberation Sans', sans-serif;letter-spacing:0.437px;">Big 106687 sq ft lot with public sewer</div>
<div class="a t" style="left:859.80px;top:563.88px;font-size:12.5px;font-weight:400;color:#3c3c3c;font-family:'Liberation Sans', sans-serif;letter-spacing:0.378px;">and paved public road access.</div>
<div class="a t" style="left:859.80px;top:578.58px;font-size:12.5px;font-weight:400;color:#3c3c3c;font-family:'Liberation Sans', sans-serif;letter-spacing:0.478px;clip-path:inset(-4px -4px 5.48px -4px);">Renovation plans have been submitted</div>
<svg class="a" style="left:1119px;top:531.7px;" width="14" height="24" viewBox="0 0 14 24" fill="none"><path d="M1.2 0.9 L12.2 11.7 L1.2 22.5" stroke="#0b1e77" stroke-width="1.6" fill="none"/></svg>
<svg class="a" style="left:782px;top:505px;overflow:hidden;" width="58" height="77" viewBox="0 0 58 77" fill="none"><defs><filter id="f3" x="-6" y="-6" width="70" height="89" filterUnits="userSpaceOnUse"><feGaussianBlur stdDeviation="0.8"/></filter></defs><g>
  <rect width="58" height="77" fill="#1a201c"/>
  <path d="M0 0 H38 L12 18 L0 24 Z" fill="#9aaabb"/>
  <path d="M2 6 C6 4 14 6 20 10 L10 18 L2 22 Z" fill="#d8e0e6"/>
  <path d="M38 0 H46 L14 20 L12 18 Z" fill="#b8c0c8"/>
  <path d="M14 20 L46 0 H58 V34 L14 34 Z" fill="#2c4a68"/>
  <path d="M28 16 L58 2 V10 L28 22 Z" fill="#3c6890"/>
  <path d="M40 20 L58 14 V20 L40 26 Z" fill="#3a6282" opacity="0.8"/>
  <path d="M4 24 C10 14 18 18 22 26 C26 14 34 18 38 26 C44 18 52 22 58 20 V62 H0 V30 Z" fill="#1c281c"/>
  <path d="M6 30 C12 30 22 30 30 33 L30 37 L6 36 Z" fill="#6a7070" opacity="0.6"/>
  <path d="M0 50 C15 48 35 52 58 50 V70 H0 Z" fill="#202820"/>
  <rect x="0" y="69" width="58" height="8" fill="#282c30"/>
  <rect x="15" y="59" width="5" height="5" fill="#a0b0c4"/>
  <rect x="16.8" y="64" width="1" height="13" fill="#707070"/>
  <rect x="44" y="60" width="3" height="17" fill="#d8a820"/>
 </g><g filter="url(#f3)">
  <rect width="58" height="77" fill="#1a201c"/>
  <path d="M0 0 H38 L12 18 L0 24 Z" fill="#9aaabb"/>
  <path d="M2 6 C6 4 14 6 20 10 L10 18 L2 22 Z" fill="#d8e0e6"/>
  <path d="M38 0 H46 L14 20 L12 18 Z" fill="#b8c0c8"/>
  <path d="M14 20 L46 0 H58 V34 L14 34 Z" fill="#2c4a68"/>
  <path d="M28 16 L58 2 V10 L28 22 Z" fill="#3c6890"/>
  <path d="M40 20 L58 14 V20 L40 26 Z" fill="#3a6282" opacity="0.8"/>
  <path d="M4 24 C10 14 18 18 22 26 C26 14 34 18 38 26 C44 18 52 22 58 20 V62 H0 V30 Z" fill="#1c281c"/>
  <path d="M6 30 C12 30 22 30 30 33 L30 37 L6 36 Z" fill="#6a7070" opacity="0.6"/>
  <path d="M0 50 C15 48 35 52 58 50 V70 H0 Z" fill="#202820"/>
  <rect x="0" y="69" width="58" height="8" fill="#282c30"/>
  <rect x="15" y="59" width="5" height="5" fill="#a0b0c4"/>
  <rect x="16.8" y="64" width="1" height="13" fill="#707070"/>
  <rect x="44" y="60" width="3" height="17" fill="#d8a820"/>
 </g></svg>
<div class="a" style="left:763px;top:594px;width:384px;height:1px;background:#8791bf;"></div>
<div class="a t" style="left:859.80px;top:606.39px;font-size:16.6px;font-weight:400;color:#1e1e1e;font-family:'Liberation Sans', sans-serif;letter-spacing:0.361px;">434 Kirkland Way</div>
<div class="a t" style="left:859.80px;top:628.60px;font-size:14px;font-weight:400;color:#444;font-family:'Liberation Sans', sans-serif;letter-spacing:0.687px;">Kirkland</div>
<div class="a t" style="left:859.80px;top:649.98px;font-size:12.5px;font-weight:400;color:#3c3c3c;font-family:'Liberation Sans', sans-serif;letter-spacing:0.413px;">Grand 538699 sq ft office space with</div>
<div class="a t" style="left:859.80px;top:664.68px;font-size:12.5px;font-weight:400;color:#3c3c3c;font-family:'Liberation Sans', sans-serif;letter-spacing:0.571px;">multliple reinforced concrete office</div>
<div class="a t" style="left:859.80px;top:679.38px;font-size:12.5px;font-weight:400;color:#3c3c3c;font-family:'Liberation Sans', sans-serif;letter-spacing:0.448px;clip-path:inset(-4px -4px 5.48px -4px);">buildings. Built in 1973, this property has</div>
<svg class="a" style="left:1119px;top:632.2px;" width="14" height="24" viewBox="0 0 14 24" fill="none"><path d="M1.2 0.9 L12.2 11.7 L1.2 22.5" stroke="#0b1e77" stroke-width="1.6" fill="none"/></svg>
<svg class="a" style="left:773px;top:616px;overflow:hidden;" width="76" height="57" viewBox="0 0 76 57" fill="none"><defs><filter id="f4" x="-6" y="-6" width="88" height="69" filterUnits="userSpaceOnUse"><feGaussianBlur stdDeviation="0.8"/></filter></defs><g>
  <rect width="76" height="57" fill="#5a9640"/>
  <rect x="0" y="0" width="76" height="20" fill="#8a8e80"/>
  <path d="M0 0 H34 V12 L0 6 Z" fill="#c4d4e4"/>
  <path d="M0 4 L34 11 L36 14 H0 Z" fill="#4e5666"/>
  <rect x="0" y="12" width="36" height="8" fill="#38393e"/>
  <rect x="28" y="13" width="8" height="3" fill="#e0e0e0"/>
  <path d="M33 0 H60 V20 H36 Z" fill="#6e7468"/>
  <path d="M40 8 C44 6 50 10 52 14 L44 16 Z" fill="#c0c4c8" opacity="0.7"/>
  <rect x="68" y="0" width="8" height="20" fill="#a8aca4"/>
  <path d="M0 19 H76 V31 L50 29 L36 27 L0 27 Z" fill="#c4b494"/>
  <path d="M36 27 L76 31 V35 L50 33 Z" fill="#4a3e34"/>
  <rect x="59" y="0" width="9" height="31" fill="#6a5242"/>
  <path d="M0 27 L36 27 L50 33 L76 35 V57 H0 Z" fill="#5a9a3e"/>
  <path d="M0 44 C20 40 50 46 76 42 V57 H0 Z" fill="#4a8232"/>
  <path d="M0 30 C4 34 6 40 8 50 L0 54 Z" fill="#2a3420"/>
  <path d="M68 57 L76 50 V57 Z" fill="#404850"/>
 </g><g filter="url(#f4)">
  <rect width="76" height="57" fill="#5a9640"/>
  <rect x="0" y="0" width="76" height="20" fill="#8a8e80"/>
  <path d="M0 0 H34 V12 L0 6 Z" fill="#c4d4e4"/>
  <path d="M0 4 L34 11 L36 14 H0 Z" fill="#4e5666"/>
  <rect x="0" y="12" width="36" height="8" fill="#38393e"/>
  <rect x="28" y="13" width="8" height="3" fill="#e0e0e0"/>
  <path d="M33 0 H60 V20 H36 Z" fill="#6e7468"/>
  <path d="M40 8 C44 6 50 10 52 14 L44 16 Z" fill="#c0c4c8" opacity="0.7"/>
  <rect x="68" y="0" width="8" height="20" fill="#a8aca4"/>
  <path d="M0 19 H76 V31 L50 29 L36 27 L0 27 Z" fill="#c4b494"/>
  <path d="M36 27 L76 31 V35 L50 33 Z" fill="#4a3e34"/>
  <rect x="59" y="0" width="9" height="31" fill="#6a5242"/>
  <path d="M0 27 L36 27 L50 33 L76 35 V57 H0 Z" fill="#5a9a3e"/>
  <path d="M0 44 C20 40 50 46 76 42 V57 H0 Z" fill="#4a8232"/>
  <path d="M0 30 C4 34 6 40 8 50 L0 54 Z" fill="#2a3420"/>
  <path d="M68 57 L76 50 V57 Z" fill="#404850"/>
 </g></svg>
<div class="a" style="left:763px;top:694px;width:384px;height:1px;background:#8791bf;"></div>
<div class="a t" style="left:859.80px;top:707.09px;font-size:16.6px;font-weight:400;color:#1e1e1e;font-family:'Liberation Sans', sans-serif;letter-spacing:0.174px;">555 110th Ave NE</div>
<div class="a t" style="left:859.80px;top:729.30px;font-size:14px;font-weight:400;color:#444;font-family:'Liberation Sans', sans-serif;letter-spacing:0.471px;">Bellevue</div>
<div class="a t" style="left:859.80px;top:750.68px;font-size:12.5px;font-weight:400;color:#3c3c3c;font-family:'Liberation Sans', sans-serif;letter-spacing:0.388px;">Large 128,700 sq ft lot with 50826 sq ft</div>
<div class="a t" style="left:859.80px;top:765.38px;font-size:12.5px;font-weight:400;color:#3c3c3c;font-family:'Liberation Sans', sans-serif;letter-spacing:0.546px;">masonry building. 25 ft freestanding</div>
<div class="a t" style="left:859.80px;top:780.08px;font-size:12.5px;font-weight:400;color:#3c3c3c;font-family:'Liberation Sans', sans-serif;letter-spacing:0.406px;clip-path:inset(-4px -4px 5.48px -4px);">lighted sign and parking for 80+ vehicles</div>
<svg class="a" style="left:1119px;top:732.7px;" width="14" height="24" viewBox="0 0 14 24" fill="none"><path d="M1.2 0.9 L12.2 11.7 L1.2 22.5" stroke="#0b1e77" stroke-width="1.6" fill="none"/></svg>
<svg class="a" style="left:773px;top:717px;overflow:hidden;" width="76" height="57" viewBox="0 0 76 57" fill="none"><defs><filter id="f5" x="-6" y="-6" width="88" height="69" filterUnits="userSpaceOnUse"><feGaussianBlur stdDeviation="0.8"/></filter></defs><g>
  <rect width="76" height="57" fill="#54525a"/>
  <rect x="0" y="0" width="76" height="28" fill="#aac8e6"/>
  <path d="M4 0 H24 V4 H4 Z" fill="#e8f0f8"/>
  <path d="M0 28 V18 L4 16 L6 9 L8 18 L11 8 L16 6 L22 7 L26 14 L30 13 L34 3 L40 2 L43 12 L47 11 L50 3 L54 1 L58 0 H76 V30 H0 Z" fill="#2a3828"/>
  <path d="M56 6 C62 4 70 8 76 6 V30 H56 Z" fill="#3a4030"/>
  <path d="M0 27 L25 27 L76 27 V37 L25 33 L0 30 Z" fill="#6ea43e"/>
  <path d="M0 27 H25 V32 L0 30 Z" fill="#6c7a4a"/>
  <path d="M0 29.5 L76 37.5 V39.5 L0 31.5 Z" fill="#b4b4aa"/>
  <path d="M0 31.5 L76 39.5 V57 H0 Z" fill="#54525a"/>
  <path d="M20 36 L60 57 H56 L18 37 Z" fill="#45434a" opacity="0.7"/>
 </g><g filter="url(#f5)">
  <rect width="76" height="57" fill="#54525a"/>
  <rect x="0" y="0" width="76" height="28" fill="#aac8e6"/>
  <path d="M4 0 H24 V4 H4 Z" fill="#e8f0f8"/>
  <path d="M0 28 V18 L4 16 L6 9 L8 18 L11 8 L16 6 L22 7 L26 14 L30 13 L34 3 L40 2 L43 12 L47 11 L50 3 L54 1 L58 0 H76 V30 H0 Z" fill="#2a3828"/>
  <path d="M56 6 C62 4 70 8 76 6 V30 H56 Z" fill="#3a4030"/>
  <path d="M0 27 L25 27 L76 27 V37 L25 33 L0 30 Z" fill="#6ea43e"/>
  <path d="M0 27 H25 V32 L0 30 Z" fill="#6c7a4a"/>
  <path d="M0 29.5 L76 37.5 V39.5 L0 31.5 Z" fill="#b4b4aa"/>
  <path d="M0 31.5 L76 39.5 V57 H0 Z" fill="#54525a"/>
  <path d="M20 36 L60 57 H56 L18 37 Z" fill="#45434a" opacity="0.7"/>
 </g></svg>
<div class="a" style="left:763px;top:795px;width:384px;height:1px;background:#8791bf;"></div>
<div class="a t" style="left:1612.20px;top:184.62px;font-size:11.5px;font-weight:400;color:#605e5c;font-family:'Liberation Sans', sans-serif;letter-spacing:-1.758px;">SCREEN</div>
<svg class="a" style="left:1659px;top:181px;" width="16" height="16" viewBox="0 0 16 16" fill="none"><circle cx="8" cy="8" r="7.2" stroke="#605e5c" stroke-width="1" fill="none"/><path d="M5.8 6.2 C5.8 4.8 6.8 4 8 4 C9.3 4 10.2 4.8 10.2 6 C10.2 7.5 8 7.8 8 9.5" stroke="#605e5c" stroke-width="1" fill="none"/><circle cx="8" cy="11.8" r="0.7" fill="#605e5c"/></svg>
<svg class="a" style="left:1891px;top:186px;" width="10" height="16" viewBox="0 0 10 16" fill="none"><path d="M1 1 L8.5 8 L1 15" stroke="#605e5c" stroke-width="1.1" fill="none"/></svg>
<div class="a t" style="left:1611.70px;top:207.48px;font-size:14.5px;font-weight:400;color:#323130;font-family:'Liberation Sans', sans-serif;letter-spacing:-0.801px;">BrowseScreen1</div>
<div class="a t" style="left:1614.20px;top:240.89px;font-size:12.6px;font-weight:400;color:#323130;font-family:'Liberation Sans', sans-serif;letter-spacing:-0.294px;-webkit-text-stroke:0.35px #323130;">Properties</div>
<div class="a t" style="left:1694.40px;top:240.55px;font-size:13px;font-weight:400;color:#484644;font-family:'Liberation Sans', sans-serif;letter-spacing:-1.390px;">Advanced</div>
<div class="a" style="left:1614px;top:259px;width:54px;height:3px;background:#742774;"></div>
<div class="a" style="left:1600px;top:262px;width:318px;height:1px;background:#d2d2d2;"></div>
<div class="a t" style="left:1612.20px;top:282.15px;font-size:13px;font-weight:400;color:#323130;font-family:'Liberation Sans', sans-serif;letter-spacing:-0.436px;">Fill</div>
<div class="a" style="left:1862px;top:276px;width:46px;height:24px;background:#fff;border:1px solid #c8c6c4;box-sizing:border-box;border-radius:2px"></div>
<svg class="a" style="left:1879px;top:280px;" width="12" height="12" viewBox="0 0 12 12" fill="none"><g stroke="#222" stroke-width="0.9" fill="none"><path d="M5 2.2 L9.3 6.3 L5 10.6 L0.8 6.3 Z"/><path d="M3.6 0.8 L5.8 0.8 L6.3 4.2"/></g><path d="M9.3 4.2 C11 5.2 11.2 7.2 9.6 9" stroke="#111" stroke-width="1.4" fill="none"/></svg>
<div class="a" style="left:1873px;top:293px;width:24px;height:2px;background:#fafafa;"></div>
<div class="a" style="left:1873px;top:295px;width:24px;height:1px;background:#e4e4e4;"></div>
<div class="a t" style="left:1612.20px;top:314.05px;font-size:13px;font-weight:400;color:#323130;font-family:'Liberation Sans', sans-serif;letter-spacing:-0.580px;">Background image</div>
<div class="a" style="left:1762px;top:308px;width:146px;height:24px;background:#fff;border:1px solid #c8c6c4;box-sizing:border-box;"></div>
<div class="a t" style="left:1766.60px;top:313.62px;font-size:13.5px;font-weight:400;color:#323130;font-family:'Liberation Sans', sans-serif;letter-spacing:-0.977px;">None</div>
<svg class="a" style="left:1890px;top:316px;" width="13" height="8" viewBox="0 0 13 8" fill="none"><path d="M0.6 0.6 L6.5 6.8 L12.4 0.6" stroke="#323130" stroke-width="1.1" fill="none"/></svg>
<div class="a t" style="left:1612.20px;top:346.45px;font-size:13px;font-weight:400;color:#323130;font-family:'Liberation Sans', sans-serif;letter-spacing:-0.359px;">Image position</div>
<div class="a" style="left:1762px;top:340px;width:146px;height:24px;background:#fff;border:1px solid #c8c6c4;box-sizing:border-box;"></div>
<svg class="a" style="left:1766px;top:346px;" width="12" height="10" viewBox="0 0 12 10" fill="none"><rect x="0.5" y="0.5" width="11" height="9" stroke="#555" stroke-width="1" fill="#fff"/><path d="M1 9 L4 4 L7 7 L9 5 L11 8 V9 Z" fill="#3cb4b4"/></svg>
<div class="a t" style="left:1783.50px;top:345.82px;font-size:13.5px;font-weight:400;color:#323130;font-family:'Liberation Sans', sans-serif;letter-spacing:-0.825px;">Fit</div>
<svg class="a" style="left:1890px;top:348px;" width="13" height="8" viewBox="0 0 13 8" fill="none"><path d="M0.6 0.6 L6.5 6.8 L12.4 0.6" stroke="#323130" stroke-width="1.1" fill="none"/></svg>
<svg class="a" style="left:343px;top:941px;" width="17" height="13" viewBox="0 0 17 13" fill="none"><rect x="0.6" y="0.6" width="15.4" height="11.4" rx="0.5" stroke="#3b3a39" stroke-width="1.1" fill="#fff"/></svg>
<div class="a t" style="left:364.30px;top:941.67px;font-size:12.5px;font-weight:400;color:#323130;font-family:'Liberation Sans', sans-serif;letter-spacing:-0.667px;">BrowseScreen1</div>
<div class="a" style="left:1284px;top:947px;width:11px;height:1px;background:#999;"></div>
<div class="a" style="left:1310px;top:946.5px;width:160px;height:1.5px;background:#555;"></div>
<div class="a" style="left:1359px;top:940px;width:3px;height:13px;background:#444;"></div>
<div class="a" style="left:1379.5px;top:943px;width:1px;height:8px;background:#444;"></div>
<svg class="a" style="left:1484px;top:941px;" width="12" height="12" viewBox="0 0 12 12" fill="none"><path d="M6 0.5 V11.5 M0.5 6 H11.5" stroke="#888" stroke-width="1.1"/></svg>
<div class="a t" style="left:1509.70px;top:941.38px;font-size:12.5px;font-weight:400;color:#666;font-family:'Liberation Sans', sans-serif;letter-spacing:0.044px;">60</div>
<div class="a t" style="left:1530.00px;top:941.38px;font-size:12.5px;font-weight:400;color:#666;font-family:'Liberation Sans', sans-serif;letter-spacing:-0.875px;">%</div>
<svg class="a" style="left:1563px;top:940px;" width="15" height="15" viewBox="0 0 15 15" fill="none"><g stroke="#222" stroke-width="1.2" fill="none"><path d="M1 14 L14 1"/><path d="M8.5 1 H14 V6.5"/><path d="M1 8.5 V14 H6.5"/></g></svg></body></html>
